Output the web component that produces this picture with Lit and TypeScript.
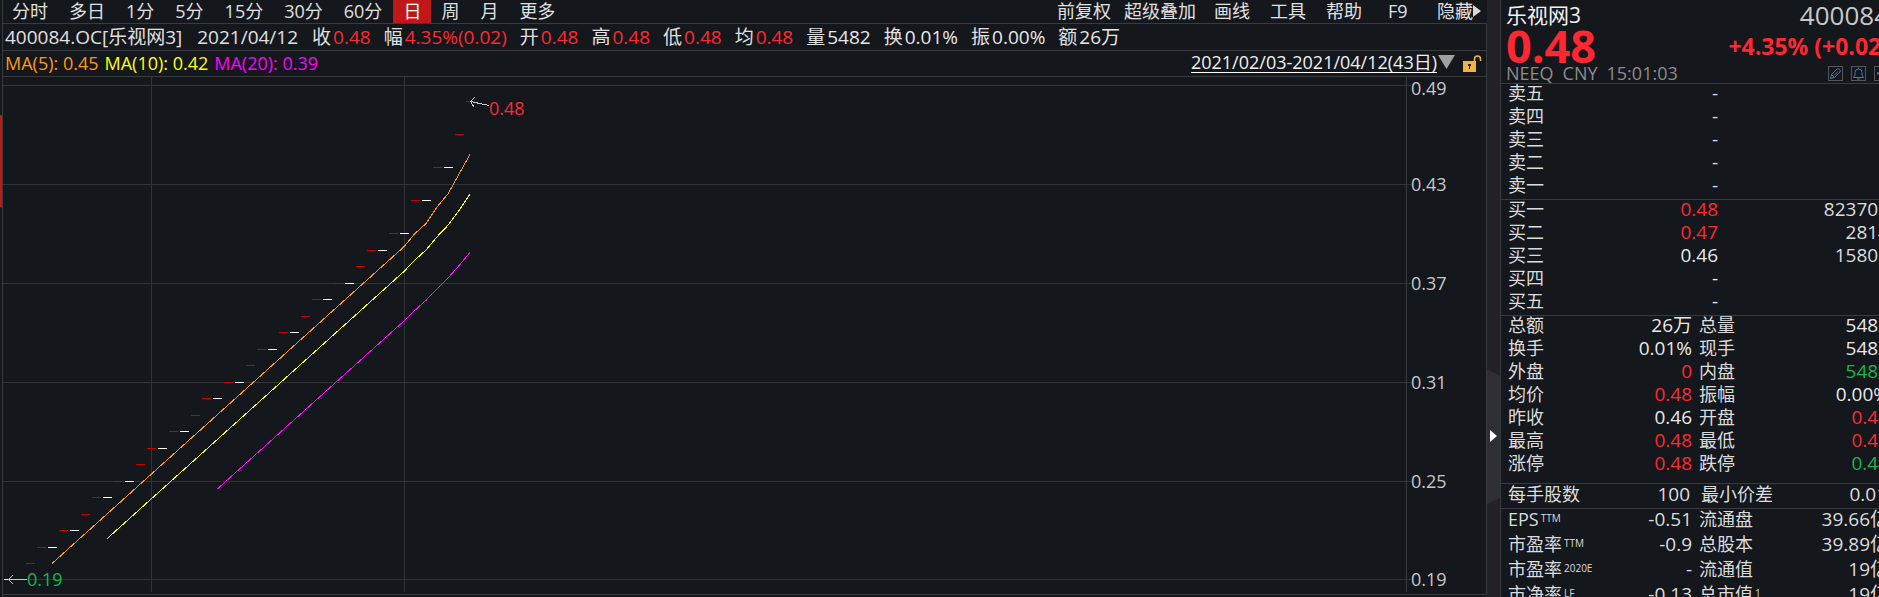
import { LitElement, html, svg, css } from "lit";
import { customElement } from "lit/decorators.js";

type Tone = "up" | "down" | "flat";

const PERIODS = ["分时", "多日", "1分", "5分", "15分", "30分", "60分", "日", "周", "月", "更多"];
const TOOLS = ["前复权", "超级叠加", "画线", "工具", "帮助", "F9"];
const QUOTE: [string, string, Tone][] = [
  ["收", "0.48", "up"], ["幅", "4.35%(0.02)", "up"], ["开", "0.48", "up"], ["高", "0.48", "up"],
  ["低", "0.48", "up"], ["均", "0.48", "up"], ["量", "5482", "flat"], ["换", "0.01%", "flat"],
  ["振", "0.00%", "flat"], ["额", "26万", "flat"],
];
const CLOSES = [
  19, 19, 20, 21, 21, 22, 22, 23, 24, 24, 25, 25, 26, 27, 27, 28, 28, 29, 30, 30, 31, 31,
  32, 33, 33, 34, 34, 35, 36, 36, 37, 37, 38, 39, 39, 40, 40, 42, 42, 44, 44, 46, 48,
];
const TICKS = [49, 43, 37, 31, 25, 19];
const STEP = 11;
const BASELINE = 502;
const yOf = (cents: number) => BASELINE + 1 - (cents - 19) * 16.5;
const rowOf = (cents: number) => Math.min(BASELINE, Math.floor(yOf(cents)));

const ASKS = ["卖五", "卖四", "卖三", "卖二", "卖一"];
const BIDS: [string, string, string, Tone][] = [
  ["买一", "0.48", "823702", "up"], ["买二", "0.47", "2814", "up"], ["买三", "0.46", "15808", "flat"],
  ["买四", "-", "", "flat"], ["买五", "-", "", "flat"],
];
const STATS: [string, string, Tone, string, string, Tone][] = [
  ["总额", "26万", "flat", "总量", "5482", "flat"],
  ["换手", "0.01%", "flat", "现手", "5482", "flat"],
  ["外盘", "0", "up", "内盘", "5482", "down"],
  ["均价", "0.48", "up", "振幅", "0.00%", "flat"],
  ["昨收", "0.46", "flat", "开盘", "0.48", "up"],
  ["最高", "0.48", "up", "最低", "0.48", "up"],
  ["涨停", "0.48", "up", "跌停", "0.44", "down"],
];
const FUNDAMENTALS: [string, string, string, string, string, string][] = [
  ["EPS", "TTM", "-0.51", "流通盘", "", "39.66亿"],
  ["市盈率", "TTM", "-0.9", "总股本", "", "39.89亿"],
  ["市盈率", "2020E", "-", "流通值", "", "19亿"],
  ["市净率", "LF", "-0.13", "总市值", "1", "19亿"],
];

const base = css`
  * { box-sizing: border-box; }
  button, a { font: inherit; color: inherit; background: none; border: 0; padding: 0; margin: 0; cursor: pointer; white-space: nowrap; }
  .up { color: #ff2832; }
  .down { color: #10b84c; }
  .flat { color: #e8e8e8; }
`;

@customElement("price-chart")
export class PriceChart extends LitElement {
  static styles = [base, css`
    :host { display: block; border-bottom: 1px solid #3a3b3f; }
    .plot { display: block; width: 100%; height: 517px; shape-rendering: crispEdges; }
    .body { display: grid; grid-template-columns: minmax(0, 1fr) 80px; }
    .axis { display: block; width: 80px; height: 515px; border-left: 1px solid #3a3b3f; }
    .grid { stroke: #323337; }
    .tick { font-size: 18px; fill: #c8c8c8; }
    .rise { fill: #c80000; }
    .same { fill: #fff; }
    .ma { fill: none; stroke-width: 1; }
    .ma5 { stroke: #ff9a0c; }
    .ma10 { stroke: #ffff00; }
    .ma20 { stroke: #ff00ff; }
    .pointer { stroke: #c8c8c8; fill: none; }
    .mark { font-size: 18px; }
    .high { fill: #ff2832; }
    .low { fill: #10b84c; }
  `];

  private average(span: number) {
    return CLOSES.map((_, i) => i).filter((i) => i >= span - 1).map((i) => {
      const mean = CLOSES.slice(i - span + 1, i + 1).reduce((a, b) => a + b, 0) / span;
      return `${5 + i * STEP},${yOf(mean).toFixed(2)}`;
    }).join(" ");
  }

  render() {
    return html`<div class="body">
      <svg class="plot" role="img" aria-label="日K线">
        ${TICKS.map((t) => svg`<line class="grid" x1="0" x2="100%" y1=${rowOf(t) + 0.5} y2=${rowOf(t) + 0.5}></line>`)}
        ${[148, 401].map((x) => svg`<line class="grid" x1=${x + 0.5} x2=${x + 0.5} y1="0" y2="515"></line>`)}
        ${CLOSES.map((c, i) => svg`<rect class=${i > 0 && c > CLOSES[i - 1] ? "rise" : "same"} x=${1 + i * STEP} y=${rowOf(c)} width="9" height="1"></rect>`)}
        <polyline class="ma ma5" points=${this.average(5)}></polyline>
        <polyline class="ma ma10" points=${this.average(10)}></polyline>
        <polyline class="ma ma20" points=${this.average(20)}></polyline>
        <path class="pointer" d="M5 502.5H24M10 498L5.5 502.5L10 507"></path>
        <path class="pointer" d="M467.5 24.5L486 28.5M472 20L467.5 24.5L471 30"></path>
        <text class="mark low" x="24" y="509">0.19</text>
        <text class="mark high" x="486" y="38">0.48</text>
      </svg>
      <svg class="axis" role="img" aria-label="价格刻度">
        ${TICKS.map((t) => svg`<text class="tick" x="4" y=${rowOf(t) + (t === 49 ? 10 : 7)}>${(t / 100).toFixed(2)}</text>
          <line class="grid" x1="0" x2="4" y1=${rowOf(t) + 0.5} y2=${rowOf(t) + 0.5}></line>`)}
      </svg>
    </div>`;
  }
}

@customElement("quote-panel")
export class QuotePanel extends LitElement {
  static styles = [base, css`
    :host { display: block; overflow: hidden; border-left: 1px solid #3a3b3f; font-size: 18px; color: #dcdcdc; }
    .sheet { width: 388px; }
    .head { padding: 3px 0 0 5px; border-bottom: 1px solid #3a3b3f; height: 84px; }
    .line { display: flex; justify-content: space-between; align-items: center; }
    .name { font-size: 21px; line-height: 24px; color: #f0f0f0; }
    .code { font-size: 26px; line-height: 24px; color: #c8c8c8; }
    .last { font-size: 45px; line-height: 38px; font-weight: 700; }
    .change { font-size: 23px; line-height: 36px; font-weight: 700; white-space: pre; }
    .meta { display: flex; gap: 9px; line-height: 17px; color: #8c8c8c; }
    .icons { display: flex; gap: 8px; }
    .icon { display: block; width: 15px; height: 15px; border: 1px solid #55565a; }
    .icon svg { display: block; width: 13px; height: 13px; fill: none; stroke: #3c78c8; }
    table { width: 100%; border-collapse: collapse; table-layout: fixed; }
    .block { padding: 0 0 0 7px; border-bottom: 1px solid #3a3b3f; }
    td, th { padding: 0 0 4px; font-weight: 400; text-align: right; height: 23px; line-height: 19px; white-space: nowrap; }
    td { font-size: 19px; }
    th { text-align: left; }
    .price { width: 130px; }
    .c1 { width: 80px; } .c2 { width: 104px; } .c3 { width: 92px; }
    .second { padding-left: 7px; }
    .stats { padding-bottom: 6px; }
    .lot td, .lot th { height: 24px; line-height: 20px; }
    .lot td { padding-right: 2px; }
    .lot .second { padding-left: 9px; }
    .fund { border-bottom: 0; }
    .fund td, .fund th { height: 25px; line-height: 21px; }
    sup { font-size: 10px; line-height: 10px; vertical-align: 4px; margin-left: 2px; }
  `];

  render() {
    return html`<div class="sheet">
      <div class="head">
        <div class="line"><span class="name">乐视网3</span><span class="code">400084</span></div>
        <div class="line"><span class="last up">0.48</span><span class="change up">+4.35% (+0.02)</span></div>
        <div class="line">
          <div class="meta"><span>NEEQ</span><span>CNY</span><span>15:01:03</span></div>
          <div class="icons">
            <button class="icon" aria-label="编辑"><svg viewBox="0 0 13 13"><path d="M1.500 11.500l1-4 5.500-5.500q1-1 2.500 .500t.500 2.500l-5.500 5.500zM2.500 7.500l3 3M5 8.500l4-4"></path></svg></button>
            <button class="icon" aria-label="提醒"><svg viewBox="0 0 13 13"><path d="M1.500 10.500h10L10 8V5.500a3.500 3.500 0 0 0-7 0V8zM5 12h3M6.500 .500v1.500"></path></svg></button>
            <button class="icon" aria-label="添加"><svg viewBox="0 0 13 13"><path d="M2 6.500h9M6.500 2v9" stroke-width="2"></path></svg></button>
          </div>
        </div>
      </div>
      <div class="block"><table>
        <colgroup><col class="c1"><col class="price"><col></colgroup>
        ${ASKS.map((a) => html`<tr><th scope="row">${a}</th><td>-</td><td></td></tr>`)}
      </table></div>
      <div class="block"><table>
        <colgroup><col class="c1"><col class="price"><col></colgroup>
        ${BIDS.map(([n, p, v, t]) => html`<tr><th scope="row">${n}</th><td class=${t}>${p}</td><td>${v}</td></tr>`)}
      </table></div>
      <div class="block stats"><table>
        <colgroup><col class="c1"><col class="c2"><col class="c3"><col></colgroup>
        ${STATS.map(([a, b, t, c, d, u]) => html`<tr><th scope="row">${a}</th><td class=${t}>${b}</td><th scope="row" class="second">${c}</th><td class=${u}>${d}</td></tr>`)}
      </table></div>
      <div class="block lot"><table>
        <colgroup><col class="c1"><col class="c2"><col class="c3"><col></colgroup>
        <tr><th scope="row">每手股数</th><td>100</td><th scope="row" class="second">最小价差</th><td>0.01</td></tr>
      </table></div>
      <div class="block fund"><table>
        <colgroup><col class="c1"><col class="c2"><col class="c3"><col></colgroup>
        ${FUNDAMENTALS.map(([a, s, b, c, n, d]) => html`<tr><th scope="row">${a}<sup>${s}</sup></th><td>${b}</td><th scope="row" class="second">${c}${n ? html`<sup>${n}</sup>` : ""}</th><td>${d}</td></tr>`)}
      </table></div>
    </div>`;
  }
}

@customElement("app-root")
export class AppRoot extends LitElement {
  static styles = [base, css`
    :host {
      display: grid; grid-template-columns: 2px minmax(0, 1fr) 13px 379px; height: 100vh; overflow: hidden;
      background: #14171c; color: #e0e0e0; font: 18px/22px "Open Sans", "Noto Sans CJK SC", sans-serif;
    }
    .edge { padding-top: 115px; }
    .thumb { height: 92px; background: #c01818; }
    .main { border-left: 1px solid #3a3b3f; }
    .bar { display: flex; align-items: center; border-bottom: 1px solid #3a3b3f; white-space: nowrap; }
    .menu { height: 24px; padding-right: 6px; align-items: stretch; }
    .periods { display: flex; gap: 21px; padding-left: 9px; }
    .periods button { padding-bottom: 1px; }
    .periods .active { background: #c01818; padding: 0 10px 1px; margin: 0 -11px 0 -10px; color: #fff; }
    .tools { display: grid; grid-template-columns: 67px 90px 56px 56px 62px 49px auto; margin-left: auto; justify-items: start; padding-bottom: 1px; }
    .more { display: flex; align-items: center; }
    .quote { height: 27px; gap: 13px; padding-left: 2px; font-size: 19px; }
    .date { margin: 0 1px 0 2px; }
    .pair { display: flex; gap: 2px; }
    .legend { height: 26px; gap: 6px; padding: 0 0 2px 2px; }
    .m5 { color: #ff9a0c; } .m10 { color: #ffff00; } .m20 { color: #ff00ff; }
    .range { margin-left: auto; display: flex; align-items: center; padding-right: 4px; }
    .range a { text-decoration: none; border-bottom: 1px solid #fff; line-height: 19px; color: #f0f0f0; }
    .frame { border-right: 1px solid #3a3b3f; }
    .split { display: flex; align-items: center; background: #232127; }
    .handle { display: block; width: 13px; height: 135px; margin-top: 275px; }
    svg { display: block; }
  `];

  render() {
    return html`
      <div class="edge"><div class="thumb"></div></div>
      <div class="main">
        <nav class="bar menu">
          <div class="periods">${PERIODS.map((p) => html`<button class=${p === "日" ? "active" : ""}>${p}</button>`)}</div>
          <div class="tools">${TOOLS.map((t) => html`<button>${t}</button>`)}
            <button class="more">隐藏<svg width="8" height="12"><path d="M0 0L8 6L0 12z" fill="#d8d8d8"></path></svg></button></div>
        </nav>
        <div class="frame">
          <div class="bar quote"><span>400084.OC[乐视网3]</span><span class="date">2021/04/12</span>
            ${QUOTE.map(([k, v, t]) => html`<span class="pair"><span>${k}</span><span class=${t}>${v}</span></span>`)}</div>
          <div class="bar legend"><span class="m5">MA(5): 0.45</span><span class="m10">MA(10): 0.42</span><span class="m20">MA(20): 0.39</span>
            <div class="range"><a href="#">2021/02/03-2021/04/12(43日)</a>
              <svg width="45" height="18" viewBox="0 0 45 18"><path d="M1 1H18L9.500 15z" fill="#a0a0a0"></path><path d="M26 7h13v11H26z" fill="#f0b440"></path><path d="M37.500 7V5a3 3 0 0 1 6 0v2" fill="none" stroke="#f0b440" stroke-width="1.500"></path><path d="M31 10h3v2h-1v3h-1v-3h-1z" fill="#30260c"></path></svg>
            </div></div>
          <price-chart></price-chart>
        </div>
      </div>
      <div class="split"><svg class="handle" viewBox="0 0 13 135"><path d="M0 0L13 7V129L0 135z" fill="#302f36"></path><path d="M3 61L10 67L3 73z" fill="#fff"></path></svg></div>
      <quote-panel></quote-panel>`;
  }
}
